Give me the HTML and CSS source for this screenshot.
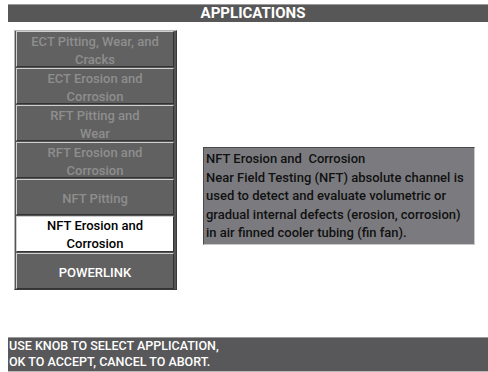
FILE: index.html
```html
<!DOCTYPE html>
<html lang="en">
<head>
    <meta charset="UTF-8">
    <meta name="viewport" content="width=device-width, initial-scale=1.0">
    <title>Applications</title>
    <link rel="stylesheet" href="styles.css">
</head>
<body>
    <div class="title-bar">APPLICATIONS</div>
    <div class="main">
        <div class="app-list">
            <div class="app-btn disabled">ECT Pitting, Wear, and<br>Cracks</div>
            <div class="app-btn disabled">ECT Erosion and<br>Corrosion</div>
            <div class="app-btn disabled">RFT Pitting and<br>Wear</div>
            <div class="app-btn disabled">RFT Erosion and<br>Corrosion</div>
            <div class="app-btn disabled">NFT Pitting</div>
            <div class="app-btn selected">NFT Erosion and<br>Corrosion</div>
            <div class="app-btn">POWERLINK</div>
        </div>
        <div class="info-box">
            NFT Erosion and&nbsp; Corrosion<br>
            Near Field Testing (NFT) absolute channel is<br>
            used to detect and evaluate volumetric or<br>
            gradual internal defects (erosion, corrosion)<br>
            in air finned cooler tubing (fin fan).
        </div>
    </div>
    <div class="status-bar">
        USE KNOB TO SELECT APPLICATION,<br>
        OK TO ACCEPT, CANCEL TO ABORT.
    </div>
</body>
</html>
```

FILE: styles.css
```css
body {
    margin: 0;
    width: 488px;
    height: 372px;
    overflow: hidden;
    background-color: #fff;
    font-family: Roboto, "Liberation Sans", sans-serif;
    font-size: 13px;
}
.title-bar {
    margin: 4px 0 0 8px;
    height: 17px;
    line-height: 17px;
    background-color: #575757;
    border-top: 1px solid #9a9a9a;
    color: #fff;
    font-weight: bold;
    font-size: 15px;
    text-align: center;
    padding-left: 10px;
}
.main {
    display: flex;
    align-items: flex-start;
    margin-top: 8px;
    height: 307px;
}
.app-list {
    margin-left: 14px;
    width: 158px;
    border: 1px solid #b4b4b4;
    border-right-color: #3a3a3a;
    border-bottom-color: #3a3a3a;
    background-color: #555;
    padding: 0 2px 0 1px;
    display: flex;
    flex-direction: column;
    gap: 1px;
}
.app-btn {
    box-sizing: border-box;
    height: 36px;
    padding-top: 3px;
    background-color: #616161;
    border: 1px solid #d0d0d0;
    border-right-color: #333;
    border-bottom-color: #333;
    color: #fff;
    font-weight: 500;
    line-height: 18px;
    text-align: center;
    display: flex;
    align-items: center;
    justify-content: center;
}
.app-btn.disabled {
    color: #8e8e8e;
}
.app-btn.selected {
    padding-top: 1px;
    background-color: #fff;
    color: #000;
}
.info-box {
    margin: 117px 0 0 26px;
    width: 268px;
    height: 94px;
    padding: 2px 0 0 2px;
    background-color: #7b7b7f;
    border: 1px solid #4a4a4a;
    border-right-color: #c8c8c8;
    border-bottom-color: #c8c8c8;
    color: #111;
    font-weight: 500;
    line-height: 18.5px;
}
.status-bar {
    margin-left: 8px;
    height: 33px;
    padding-left: 1px;
    background-color: #58585a;
    border-top: 1px solid #9a9a9a;
    border-bottom: 1px solid #b8b8b8;
    color: #fff;
    font-weight: 500;
    font-size: 12.5px;
    line-height: 16px;
}
```
